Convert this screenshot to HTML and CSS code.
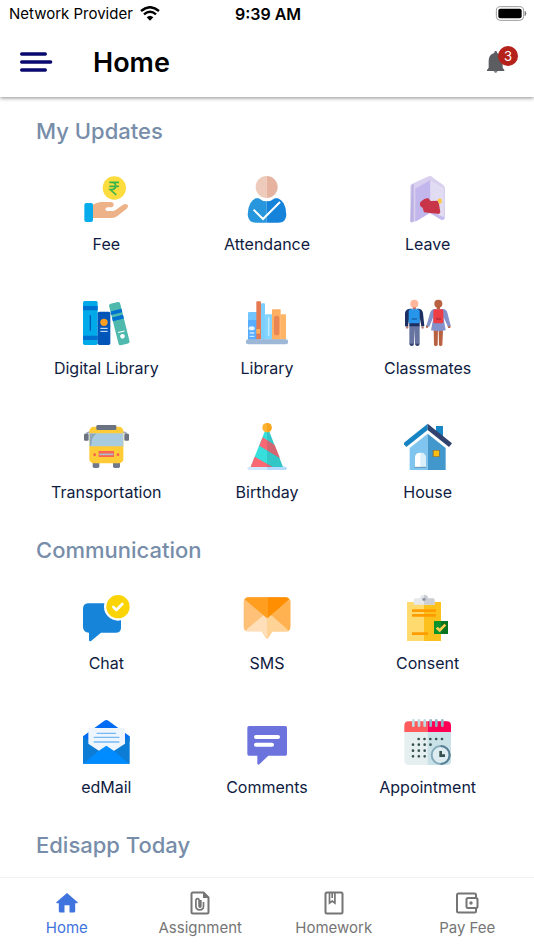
FILE: index.html
```html
<!DOCTYPE html>
<html lang="en">
<head>
<meta charset="utf-8">
<meta name="viewport" content="width=device-width, initial-scale=1">
<title>Home</title>
<link rel="stylesheet" href="styles.css">
</head>
<body>
<div class="status">
  <span class="carrier">Network Provider
    <svg width="20" height="15" viewBox="0 0 60 45" fill="none" stroke="#000" stroke-width="7"><path d="M3 15Q30-8 57 15M12 25Q30 9 48 25"/><path d="M20 34Q30 25 40 34L30 44Z" fill="#000" stroke="none"/></svg>
  </span>
  <time class="clock">9:39 AM</time>
  <svg class="battery" width="32" height="15" viewBox="0 0 96 45"><rect x="4" y="2" width="82" height="41" rx="12" fill="#fff" stroke="#999" stroke-width="3"/><rect x="10" y="8" width="70" height="29" rx="6"/><path d="M90 16q6 6 0 13z" fill="#777" stroke="#777" stroke-width="2"/></svg>
</div>
<header class="header">
  <button class="icon-button" aria-label="Menu"><svg width="34" height="22" viewBox="0 0 102 66" stroke="#08086f" stroke-width="10" stroke-linecap="round"><path d="M5 9H76M5 33H92M5 57H76"/></svg></button>
  <h1>Home</h1>
  <button class="icon-button bell" aria-label="Notifications"><svg width="18" height="24" viewBox="0 0 54 72" fill="#5b5d60"><path d="M22 7q0-4 4-4t4 4v2q17 5 17 24v20l5 7v3H0v-3l5-7V33Q5 13 22 9zM20 64h12q-2 4-6 4t-6-4"/></svg><span class="badge">3</span></button>
</header>
<main class="content">
  <section>
    <h2>My Updates</h2>
    <div class="grid">
      <a class="tile" href="#fee"><svg viewBox="126 30 144 144"><circle cx="223" cy="69" r="35" fill="#fddc3e"/><path d="M208 52H237M208 64H237M210 52h6q11 0 11 11t-16 11l18 16" fill="none" stroke="#38b44a" stroke-width="5"/><path d="M158 119q15-8 25-8h29q9 1 9 8t-9 8h-11q-5 2-5 7l5 4h19q6-1 10-5l19-14q8-4 13 0t-2 12l-29 23q-7 5-15 5H158z" fill="#edb288"/><rect x="133" y="114" width="26" height="57" rx="6" fill="#05abeb"/></svg><span>Fee</span></a>
      <a class="tile" href="#attendance"><svg viewBox="609 30 144 144"><path d="M680 33a33 33 0 0 0 0 66z" fill="#edcaba"/><path d="M680 33a33 33 0 0 1 0 66z" fill="#e7b3a1"/><path d="M680 109q-14 0-24-9h-9q-10 4-16 15-8 14-8 34 2 24 25 24h32z" fill="#2896dc"/><path d="M680 109q14 0 25-9h9q10 4 17 15 8 14 8 34-1 24-24 24h-35z" fill="#1683da"/><path d="M643 136L669 162 718 113" fill="none" stroke="#fff" stroke-width="6" stroke-linecap="square"/></svg><span>Attendance</span></a>
      <a class="tile" href="#leave"><svg viewBox="132 30 144 144"><path d="M151 62l4-5 51-23q10-3 14 5l31 22 4 8v87q-3 10-12 6l-32-20-54 31-6-2z" fill="#d9d0ef"/><path d="M155 60l6-3v111l-7 3-3-2z" fill="#bdb1e4"/><path d="M166 71L211 45v98l-45 27z" fill="#c1b7ec"/><path d="M211 47L251 69v92l-40-23z" fill="#e2dcf3"/><path d="M211 138l44 20q-3 10-12 6l-34-20z" fill="#c6bbee"/><path d="M185 108q9-10 20-8l7 8 21-1 4 10 4 25-4 5-45-5-4-14q-10-3-8-15z" fill="#c93548"/><path d="M234 102q8-4 11 2v9l-7 4-5-10z" fill="#ffc83d"/></svg><span>Leave</span></a>
      <a class="tile" href="#digital-library"><svg viewBox="126 27 144 144"><rect x="129" y="33" width="44" height="132" rx="5" fill="#00a9e7"/><path d="M129 48h44v13h-44zM129 137h44v13h-44z" fill="#0070d1"/><path d="M151 76v46" stroke="#0059bd" stroke-width="4"/><rect x="173" y="65" width="38" height="100" rx="5" fill="#0055b8"/><circle cx="192" cy="97" r="11" fill="#ff9e20"/><path d="M181 115h22M181 124h22" stroke="#e7f5ff" stroke-width="3"/><g transform="rotate(-14 238 101)"><rect x="221" y="37" width="34" height="128" rx="6" fill="#4eb9ac"/><path d="M221 59h34v11h-34zM221 78h34v11h-34z" fill="#0070d1"/><path d="M228 126h20" stroke="#fff" stroke-width="3"/><circle cx="238" cy="140" r="7" fill="#fff"/></g></svg><span>Digital Library</span></a>
      <a class="tile" href="#library"><svg viewBox="609 27 144 144"><rect x="624" y="66" width="27" height="83" rx="3" fill="#72c5fd"/><path d="M624 90h27v59h-27z" fill="#59adff"/><rect x="649" y="34" width="14" height="115" rx="3" fill="#e57a52"/><rect x="663" y="40" width="12" height="109" rx="3" fill="#7bcefd"/><rect x="675" y="73" width="22" height="76" rx="3" fill="#83d5ff"/><rect x="696" y="58" width="26" height="91" rx="3" fill="#ffaf61"/><rect x="721" y="73" width="17" height="76" rx="3" fill="#ffb466"/><rect x="702" y="77" width="16" height="59" rx="8" fill="#e98655"/><path d="M649 117h11v14h-11z" fill="#ffb15d"/><ellipse cx="635" cy="115" rx="9" ry="6" fill="#e5f6ff"/><path d="M629 129h14M629 139h14M686 82v55" stroke="#c8eaff" stroke-width="4"/><rect x="618" y="148" width="126" height="15" rx="6" fill="#9db8d7"/></svg><span>Library</span></a>
      <a class="tile" href="#classmates"><svg viewBox="132 27 144 144"><path d="M139 106l-2 8q4 4 8 0v-8zM184 106v8q4 4 8 0l-2-8z" fill="#b6867d"/><circle cx="163" cy="41" r="12" fill="#ffb69d"/><path d="M158 51h10v8h-10z" fill="#e88b76"/><path d="M148 106h31v55q-6 10-14 0l-1-45-2 45q-7 10-14 0z" fill="#66749f"/><path d="M148 161h14q-1 7-7 7t-7-7zM165 161h14q-1 7-7 7t-7-7z" fill="#304069"/><path d="M149 56h28q11 2 12 14l4 38h-9l-5-27v28h-31V81l-4 28h-9l0-40q1-11 14-13z" fill="#1d2e61"/><path d="M155 56l8 7 8-7" fill="none" stroke="#d9efff" stroke-width="4"/><rect x="146" y="58" width="33" height="42" rx="5" fill="#2795e9"/><path d="M155 87h16" stroke="#174c90" stroke-width="3"/><circle cx="235" cy="41" r="12" fill="#b86242"/><path d="M230 50h10v9h-10zM221 120h13l-1 46q-6 5-11 0zM236 120h13l-2 46q-6 5-10 0zM198 106h9l-4 8q-5 1-5-3zM263 106h9l-1 7q-4 2-7 0z" fill="#b86242"/><path d="M222 57h27q11 0 14 14l9 36-8 3-14-30 7 41q-22 5-44 0l8-42-13 31-9-2 11-38q3-11 12-13z" fill="#8392ca"/><path d="M228 57l7 6 7-6" fill="none" stroke="#ffd0d0" stroke-width="3"/><rect x="220" y="58" width="30" height="42" rx="5" fill="#ec3e44"/><path d="M228 87h15" stroke="#992735" stroke-width="3"/></svg><span>Classmates</span></a>
      <a class="tile" href="#transportation"><svg viewBox="126 33 144 144"><path d="M151 61h-5q-8 1-7 10M248 61h5q8 1 7 10" fill="none" stroke="#a2adc0" stroke-width="5"/><rect x="132" y="65" width="14" height="21" rx="3" fill="#6b7281"/><rect x="253" y="65" width="14" height="21" rx="3" fill="#6b7281"/><rect x="158" y="143" width="20" height="25" rx="5" fill="#70798b"/><rect x="219" y="143" width="21" height="25" rx="5" fill="#70798b"/><rect x="148" y="44" width="102" height="110" rx="13" fill="#ffcb37"/><path d="M148 64h102v39H148z" fill="#a9cbe0"/><path d="M150 65h19q-11 8-12 15l-4 22h-3z" fill="#8fa7bb"/><rect x="169" y="39" width="60" height="15" rx="4" fill="#6b7281"/><path d="M176 117h46v18h-46z" fill="#fa6353"/><path d="M178 127h42" stroke="#a8bfcb" stroke-width="5"/><circle cx="164" cy="128" r="4" fill="#fa5a52"/><circle cx="234" cy="128" r="4" fill="#fa5a52"/></svg><span>Transportation</span></a>
      <a class="tile" href="#birthday"><svg viewBox="609 33 144 144"><rect x="622" y="164" width="118" height="10" rx="5" fill="#d3e9ff"/><path d="M681 164h54q5 0 5 5t-5 5h-54z" fill="#b3dbff"/><path d="M676 54h10l43 111h-97z" fill="#36dfdc"/><path d="M668 76l-10 25 62 38-16-40zM644 134l-12 31h66z" fill="#fb6873"/><path d="M681 54h5l43 111h-48z" fill="#255668" opacity=".18"/><circle cx="681" cy="47" r="14" fill="#ffb331"/><path d="M681 33a14 14 0 0 1 0 28z" fill="#f7a51e"/></svg><span>Birthday</span></a>
      <a class="tile" href="#house"><svg viewBox="132 33 144 144"><path d="M228 42h21v36l-21-18z" fill="#1987c7"/><path d="M149 108l54-43v109h-54z" fill="#80c5ef"/><path d="M203 65l54 43v66h-54z" fill="#4297cd"/><path d="M203 35L130 94l9 11 64-51z" fill="#1683c3"/><path d="M203 35L276 94l-9 11-64-51z" fill="#30426d"/><path d="M165 165v-29q0-14 16-14t16 14v29z" fill="#fff"/><path d="M181 122q16 0 16 14v29h-16z" fill="#d9f0fb"/><path d="M163 166h35" stroke="#507c9c" stroke-width="2"/><path d="M218 114h21v21h-21z" fill="#7f7440"/><path d="M221 116h16v17h-16z" fill="#ffbc13"/></svg><span>House</span></a>
    </div>
  </section>
  <section>
    <h2>Communication</h2>
    <div class="grid">
      <a class="tile" href="#chat"><svg viewBox="126 27 144 144"><path d="M144 55h82q17 1 17 17v56q0 15-16 15h-44l-30 25q-6 3-6-3v-22q-18-1-18-17V72q0-16 15-17z" fill="#1684d8"/><circle cx="234" cy="65" r="39" fill="#fff" stroke="#fff" stroke-width="6"/><circle cx="234" cy="65" r="35" fill="#fbd405"/><path d="M220 66l9 9 18-18" fill="none" stroke="#fff" stroke-width="8" stroke-linecap="round" stroke-linejoin="round"/></svg><span>Chat</span></a>
      <a class="tile" href="#sms"><svg viewBox="609 27 144 144"><path d="M625 37h112q14 0 14 14v74q0 14-14 14h-40l-12 19q-4 5-8 0l-12-19h-40q-14 0-14-14V51q0-14 14-14z" fill="#ffc077"/><path d="M682 88l69-44v81q0 14-14 14h-55z" fill="#ffb24f"/><path d="M682 80l63 56-8 3h-40l-12 19-3 2z" fill="#ffd296"/><path d="M682 80l-65 56 8 3h40l12 19 5 2z" fill="#ffdfb9"/><path d="M614 43q4-6 11-6h57v62q-5 0-8-5z" fill="#ff9e1f"/><path d="M682 37h55q7 0 11 6l-59 51q-4 5-7 5z" fill="#ff8f00"/></svg><span>SMS</span></a>
      <a class="tile" href="#consent"><svg viewBox="132 27 144 144"><path d="M141 51h52v117h-52z" fill="#ffda6f"/><path d="M192 51h51v117h-51z" fill="#fdc11e"/><path d="M161 59V45q0-5 5-5h14q0-11 12-11t12 11h15q5 0 5 5v14z" fill="#e6e8eb"/><path d="M192 29q12 0 12 11h15q5 0 5 5v14h-32z" fill="#cbcfd5"/><circle cx="192" cy="43" r="5" fill="#8c96a3"/><path d="M156 77h72M156 91h72M156 146h48" stroke="#ff9c00" stroke-width="8"/><path d="M222 108h42v39h-42z" fill="#0a922b"/><path d="M243 108h21v39h-21z" fill="#067420"/><path d="M230 128l9 8 17-17" fill="none" stroke="#ffcf51" stroke-width="8"/></svg><span>Consent</span></a>
      <a class="tile" href="#edmail"><svg viewBox="126 24 144 144"><path d="M129 79L193 32q6-4 12 0l64 47v15H129z" fill="#006cf4"/><path d="M129 79l70 52 70-52v82H129z" fill="#0d7cd4"/><path d="M145 54h110v47l-56 36-54-36z" fill="#eef5fc"/><path d="M170 70h58M161 82h77M161 96h77" stroke="#73b9f3" stroke-width="4"/><path d="M129 161l50-40 20-14 20 14 50 40z" fill="#008bff"/></svg><span>edMail</span></a>
      <a class="tile" href="#comments"><svg viewBox="609 24 144 144"><path d="M627 48h109q5 0 5 5v79q0 5-5 5h-51l-27 26q-6 3-6-4v-22h-25q-5 0-5-5V53q0-5 5-5z" fill="#6d73dd"/><path d="M648 81h66M648 104h48" stroke="#fff" stroke-width="12" stroke-linecap="round"/></svg><span>Comments</span></a>
      <a class="tile" href="#appointment"><svg viewBox="132 399 144 144"><rect x="133" y="409" width="140" height="131" rx="13" fill="#e6eff0"/><path d="M203 409h57q13 0 13 13v105q0 13-13 13h-57z" fill="#c9e2e8"/><path d="M133 441v-19q0-13 13-13h57v32z" fill="#ff5a5c"/><path d="M203 409h57q13 0 13 13v19h-70z" fill="#ff0055"/><path d="M160 406v16M177 406v16M194 406v16" stroke="#bddde4" stroke-width="8" stroke-linecap="round"/><path d="M212 406v16M229 406v16M247 406v16" stroke="#8eb8c6" stroke-width="8" stroke-linecap="round"/><path d="M176 462h80M159 479h56M159 497h40M159 514h40" stroke="#35514f" stroke-width="8" stroke-linecap="round" stroke-dasharray="0 17.5"/><circle cx="242" cy="510" r="27" fill="#dcecf0" stroke="#85aabb" stroke-width="6"/><path d="M242 483a27 27 0 0 1 0 54" fill="none" stroke="#567f94" stroke-width="6"/><path d="M242 498v14h13" fill="none" stroke="#35514f" stroke-width="8"/></svg><span>Appointment</span></a>
    </div>
  </section>
  <section>
    <h2>Edisapp Today</h2>
  </section>
</main>
<nav class="tabs" aria-label="Main">
  <a class="tab active" href="#home" aria-current="page"><svg viewBox="0 0 24 24" fill="currentColor"><path d="M12 2L1.3 11.3q-.4.7.5.9h2V20q0 1.500 1.500 1.500h4.200v-7.300h5v7.300h4.200q1.500 0 1.500-1.500v-7.800h2q.9-.2.5-.9z"/></svg>Home</a>
  <a class="tab" href="#assignment"><svg viewBox="0 0 24 24" fill="none" stroke="currentColor" stroke-width="2" stroke-linejoin="round"><path d="M15.500 1.500H5q-1.500 0-1.500 1.500v18q0 1.500 1.500 1.500h14q1.500 0 1.500-1.500V6.500z"/><path d="M15 1.500l5.500 5.500H15z" fill="currentColor" stroke="none"/><path d="M12.800 9v6.500q-.8 1.200-1.700 0V9.700q0-2-1.600-2t-1.600 2v5.800q0 3.300 3.800 3.300t3.800-3.300V11" stroke-width="1.700"/></svg>Assignment</a>
  <a class="tab" href="#homework"><svg viewBox="0 0 24 24" fill="none" stroke="currentColor" stroke-width="2"><rect x="3.500" y="1.500" width="17" height="21" rx="1.500"/><path d="M7.500 2v10l2.700-2 2.700 2V2M10.200 2v5" stroke-width="1.700"/></svg>Homework</a>
  <a class="tab" href="#pay-fee"><svg viewBox="0 0 24 24" fill="none" stroke="currentColor" stroke-width="2" stroke-linejoin="round"><path d="M21 7V4q0-1.500-1.500-1.500h-16Q2 2.500 2 4v16q0 1.500 1.500 1.500h16Q21 21.500 21 20v-3"/><rect x="11.500" y="7" width="11" height="10" rx="1.500"/><circle cx="16" cy="12" r="1.700" fill="currentColor" stroke="none"/></svg>Pay Fee</a>
</nav>
</body>
</html>
```

FILE: styles.css
```css
* { box-sizing: border-box; }

body {
  margin: 0;
  height: 100vh;
  display: flex;
  flex-direction: column;
  background: #fff;
  color: #0f1c3f;
  font-family: Inter, "Liberation Sans", sans-serif;
}

svg { display: block; flex: none; }
a { color: inherit; text-decoration: none; }
h1, h2 { margin: 0; }

.status {
  position: relative;
  z-index: 2;
  display: grid;
  grid-template-columns: 1fr auto 1fr;
  align-items: center;
  height: 27px;
  padding: 0 7px 0 9px;
  background: #fff;
  color: #000;
  font-size: 15px;
}

.carrier { display: flex; align-items: center; gap: 7px; }
.clock { font-size: 16px; font-weight: 600; }
.battery { justify-self: end; }

.header {
  position: relative;
  z-index: 1;
  display: flex;
  align-items: center;
  height: 70px;
  padding: 0 29px 0 20px;
  background: #fff;
  box-shadow: 0 1px 4px rgba(0, 0, 0, 0.45);
}

.header h1 {
  flex: 1;
  margin-left: 39px;
  color: #000;
  font-size: 27px;
  font-weight: 600;
}

.icon-button {
  padding: 0;
  border: 0;
  background: none;
  font: inherit;
}

.bell { position: relative; }

.badge {
  position: absolute;
  top: -4px;
  right: -13px;
  width: 20px;
  border-radius: 50%;
  background: #b5221c;
  color: #fff;
  font-size: 13px;
  line-height: 20px;
}

.content {
  flex: 1;
  min-height: 0;
  overflow: hidden auto;
  scrollbar-width: none;
  padding: 10px 26px 0;
}

.content h2 {
  margin: 8px 10px 7px;
  color: #778da9;
  font-size: 22px;
  font-weight: 500;
  line-height: 32px;
}

.content section { display: flow-root; }

.grid {
  display: grid;
  grid-template-columns: repeat(3, 1fr);
}

.tile {
  display: flex;
  flex-direction: column;
  align-items: center;
  gap: 9px;
  padding: 21px 0 22px;
  font-size: 16px;
  line-height: 24px;
}

.tile svg { width: 48px; height: 48px; }

.tabs {
  display: grid;
  grid-template-columns: repeat(4, 1fr);
  height: 73px;
  border-top: 1px solid #f2f2f2;
  background: #fff;
}

.tab {
  display: flex;
  flex-direction: column;
  align-items: center;
  gap: 3px;
  padding-top: 13px;
  color: #757575;
  font-size: 15px;
  line-height: 20px;
}

.tab svg { width: 24px; height: 24px; }
.active { color: #3f73dd; }
```
